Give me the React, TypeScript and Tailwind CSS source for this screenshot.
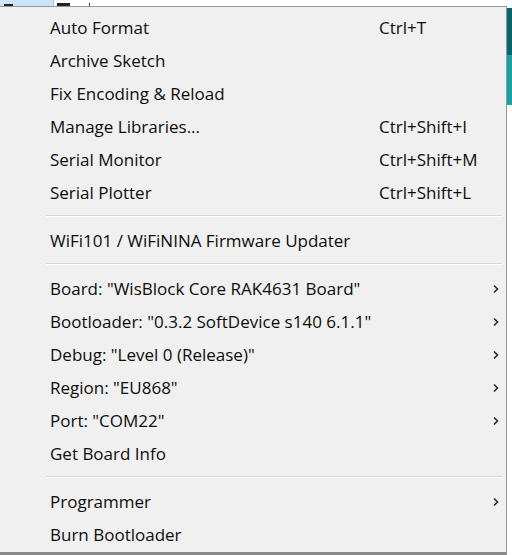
import React from 'react';

type Item =
  | { kind: 'item'; label: string; shortcut?: string; sub?: boolean }
  | { kind: 'sep' };

const items: Item[] = [
  { kind: 'item', label: 'Auto Format', shortcut: 'Ctrl+T' },
  { kind: 'item', label: 'Archive Sketch' },
  { kind: 'item', label: 'Fix Encoding & Reload' },
  { kind: 'item', label: 'Manage Libraries...', shortcut: 'Ctrl+Shift+I' },
  { kind: 'item', label: 'Serial Monitor', shortcut: 'Ctrl+Shift+M' },
  { kind: 'item', label: 'Serial Plotter', shortcut: 'Ctrl+Shift+L' },
  { kind: 'sep' },
  { kind: 'item', label: 'WiFi101 / WiFiNINA Firmware Updater' },
  { kind: 'sep' },
  { kind: 'item', label: 'Board: "WisBlock Core RAK4631 Board"', sub: true },
  { kind: 'item', label: 'Bootloader: "0.3.2 SoftDevice s140 6.1.1"', sub: true },
  { kind: 'item', label: 'Debug: "Level 0 (Release)"', sub: true },
  { kind: 'item', label: 'Region: "EU868"', sub: true },
  { kind: 'item', label: 'Port: "COM22"', sub: true },
  { kind: 'item', label: 'Get Board Info' },
  { kind: 'sep' },
  { kind: 'item', label: 'Programmer', sub: true },
  { kind: 'item', label: 'Burn Bootloader' },
];

const Chevron = () => (
  <svg width="8" height="10" viewBox="0 0 8 10" className="text-[#2a2a2a]">
    <path d="M2 1.5 L5.5 5 L2 8.5" fill="none" stroke="currentColor" strokeWidth="1.6" />
  </svg>
);

const App: React.FC = () => {
  return (
    <div
      className="w-[512px] h-[555px] flex flex-col bg-white overflow-hidden"
      style={{ fontFamily: '"Open Sans", "Noto Sans", sans-serif' }}
    >
      {/* strip of the window behind */}
      <div className="h-[6px] flex items-end">
        <div className="w-[54px] h-full bg-[#cce4f7] border-r border-[#99c9ef] flex items-end pl-[4px]">
          <div className="w-[9px] h-[2px] bg-[#222]" />
        </div>
        <div className="ml-[3px] w-[13px] h-[3px] bg-[#222]" />
        <div className="ml-[19px] w-[1px] h-[3px] bg-[#444]" />
      </div>
      <div className="flex flex-1 min-h-0">
        <div className="w-[507px] bg-[#f0f0f0] border-t border-r border-[#979797] border-b-[3px] border-b-[#8a8a8a] pt-[4px] text-[17px] text-[#0d0d0d]">
          {items.map((it, i) =>
            it.kind === 'sep' ? (
              <div key={i} className="h-[15px] pt-[6px] pl-[46px] pr-[4px]">
                <div className="h-[1px] bg-[#d7d7d7]" />
                <div className="h-[1px] bg-white" />
              </div>
            ) : (
              <div key={i} className="h-[33px] flex items-center">
                <span className="pl-[50px] w-[379px] whitespace-nowrap">{it.label}</span>
                <span className="flex-1 whitespace-nowrap">{it.shortcut}</span>
                {it.sub && (
                  <span className="w-[14px] flex items-center">
                    <Chevron />
                  </span>
                )}
              </div>
            )
          )}
        </div>
        <div className="w-[5px] flex flex-col">
          <div className="h-[2px] bg-white" />
          <div className="h-[47px] bg-[#05676a]" />
          <div className="h-[50px] bg-[#17a2a6]" />
          <div className="flex-1 bg-white" />
        </div>
      </div>
    </div>
  );
};

export default App;
